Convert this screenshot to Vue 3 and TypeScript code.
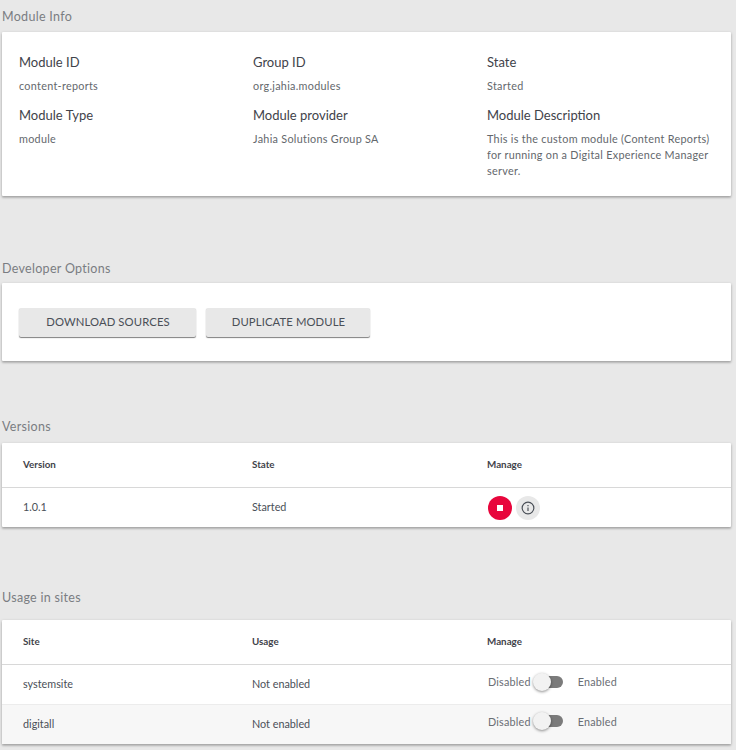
<script setup lang="ts">
const info = [
  { label: 'Module ID', value: 'content-reports' },
  { label: 'Group ID', value: 'org.jahia.modules' },
  { label: 'State', value: 'Started' },
  { label: 'Module Type', value: 'module' },
  { label: 'Module provider', value: 'Jahia Solutions Group SA' },
  { label: 'Module Description', value: 'This is the custom module (Content Reports) for running on a Digital Experience Manager server.' },
]
const sites = ['systemsite', 'digitall']
</script>

<template>
  <div class="page">
    <section class="s1">
      <h2 class="title">Module Info</h2>
      <div class="card info">
        <div v-for="i in info" :key="i.label" class="field">
          <div class="label">{{ i.label }}</div>
          <div class="value">{{ i.value }}</div>
        </div>
      </div>
    </section>

    <section class="s2">
      <h2 class="title">Developer Options</h2>
      <div class="card dev">
        <button class="btn wide">DOWNLOAD SOURCES</button>
        <button class="btn">DUPLICATE MODULE</button>
      </div>
    </section>

    <section class="s3">
      <h2 class="title">Versions</h2>
      <div class="card">
        <div class="row head">
          <span>Version</span><span>State</span><span>Manage</span>
        </div>
        <div class="row body">
          <span>1.0.1</span><span>Started</span>
          <span class="actions">
            <span class="round stop"><i class="square"></i></span>
            <span class="round about">
              <svg width="14" height="14" viewBox="0 0 24 24" fill="none" stroke="#4a4f57" stroke-width="2">
                <circle cx="12" cy="12" r="10" />
                <path d="M12 11v6" />
                <path d="M12 7v2" />
              </svg>
            </span>
          </span>
        </div>
      </div>
    </section>

    <section class="s4">
      <h2 class="title">Usage in sites</h2>
      <div class="card">
        <div class="row head">
          <span>Site</span><span>Usage</span><span>Manage</span>
        </div>
        <div v-for="(s, n) in sites" :key="s" class="row body" :class="{ odd: n === 1 }">
          <span>{{ s }}</span><span>Not enabled</span>
          <span class="toggle-line">
            <span>Disabled</span>
            <span class="switch"><i class="track"></i><i class="thumb"></i></span>
            <span>Enabled</span>
          </span>
        </div>
      </div>
    </section>
  </div>
</template>

<style>
html, body { margin: 0; background: #e8e8e8; }
</style>

<style scoped>
.page {
  width: 736px;
  height: 750px;
  overflow: hidden;
  box-sizing: border-box;
  padding: 0 5px 0 2px;
  background: #e8e8e8;
  font-family: "Lato", "Open Sans", sans-serif;
  color: #4a4f57;
}
.title {
  margin: 0;
  font-size: 12.5px;
  font-weight: 400;
  line-height: 16px;
  color: #7a7d82;
  letter-spacing: 0.3px;
}
.s1 { padding-top: 9px; }
.s1 .title { margin-bottom: 7px; }
.s2 { padding-top: 65px; }
.s2 .title { margin-bottom: 6px; }
.s3 { padding-top: 58px; }
.s3 .title { margin-bottom: 8px; }
.s4 { padding-top: 63px; }
.s4 .title { margin-bottom: 14px; }
.card {
  background: #fff;
  border-radius: 1px;
  box-shadow: 0 1px 3px rgba(0,0,0,.25), 0 2px 2px rgba(0,0,0,.12);
}
.info {
  height: 164px;
  box-sizing: border-box;
  padding: 21px 10px 0 17px;
  display: grid;
  grid-template-columns: repeat(3, 1fr);
  grid-template-rows: 53px auto;
}
.label {
  font-size: 13px;
  line-height: 18px;
  color: #3f434a;
}
.value {
  margin-top: 7px;
  font-size: 10.8px;
  line-height: 16px;
  color: #63676c;
  letter-spacing: 0.3px;
  max-width: 228px;
}
.dev {
  height: 78px;
  box-sizing: border-box;
  padding: 25px 17px 0;
  display: flex;
  gap: 10px;
  align-items: flex-start;
}
.btn {
  width: 164px;
  height: 29px;
  padding: 0 0 2px 1px;
  border: 0;
  border-radius: 2px;
  background: #e8e8e8;
  box-shadow: 0 1px 1px rgba(0,0,0,.5);
  font-family: inherit;
  font-size: 11.3px;
  color: #4a4f57;
  letter-spacing: 0.1px;
}
.btn.wide { width: 177px; }
.row {
  display: grid;
  grid-template-columns: 229px 235px 1fr;
  padding-left: 21px;
  align-items: center;
  font-size: 10.8px;
}
.head {
  height: 42px;
  padding-bottom: 2px;
  border-bottom: 1px solid #d8d8d8;
  font-weight: 700;
  font-size: 9.8px;
  color: #3f434a;
}
.body {
  height: 37px;
  padding-bottom: 2px;
  color: #4a4f57;
}
.body + .body {
  height: 36px;
  padding-bottom: 3px;
  border-top: 1px solid #ececec;
}
.odd { background: #f7f7f7; }
.actions { display: flex; gap: 4px; margin-left: 1px; margin-top: 2px; }
.round {
  width: 24px;
  height: 24px;
  border-radius: 50%;
  display: flex;
  align-items: center;
  justify-content: center;
}
.stop { background: #e8063c; }
.square { width: 6px; height: 6px; background: #fff; }
.about { background: #e8e8e8; }
.toggle-line {
  display: flex;
  align-items: center;
  color: #6a6e74;
  margin-top: -4px;
  margin-left: 1px;
  letter-spacing: 0.2px;
}
.switch {
  position: relative;
  width: 31px;
  height: 16px;
  margin: 0 14px 0 2px;
  flex: none;
}
.track {
  position: absolute;
  left: 3px;
  top: 2px;
  width: 27px;
  height: 12px;
  border-radius: 6px;
  background: #7b7b7b;
}
.thumb {
  position: absolute;
  left: 0;
  top: -1px;
  width: 18px;
  height: 18px;
  border-radius: 50%;
  background: #f2f2f2;
  box-shadow: 0 1px 3px rgba(0,0,0,.45);
}
</style>
